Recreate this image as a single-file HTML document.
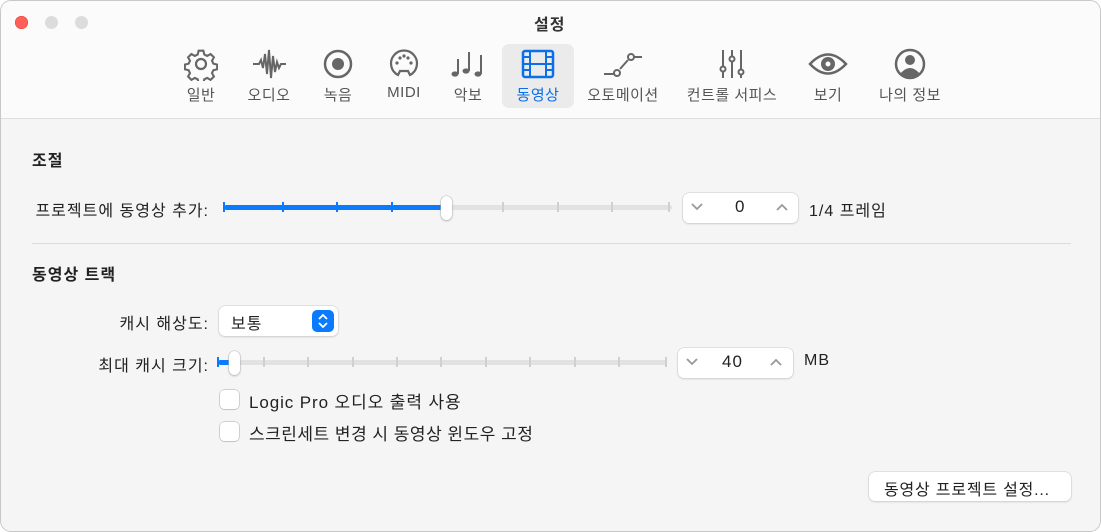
<!DOCTYPE html>
<html><head><meta charset="utf-8"><style>
*{margin:0;padding:0;box-sizing:border-box}
body{width:1101px;height:532px;background:#fff;font-family:"Liberation Sans","Noto Sans CJK KR",sans-serif;color:#222;position:relative;overflow:hidden}
.win{position:absolute;left:0;top:0;width:1101px;height:532px;border:1px solid #c8c8c8;border-radius:11px;overflow:hidden;background:#f5f5f5}
.tb{position:absolute;left:0;top:0;right:0;height:118px;background:#fbfbfb;border-bottom:1px solid #dedede}
.tl{position:absolute;top:15px;width:13px;height:13px;border-radius:50%}
.t{position:absolute;font-size:16px;white-space:nowrap;letter-spacing:1px}
.r{text-align:right;width:300px}
.item{position:absolute;top:46px;width:110px;margin-left:-55px;text-align:center;font-size:15px;color:#555;letter-spacing:.5px}
.item svg{display:block;margin:0 auto 3px;height:34px}
.sel{position:absolute;left:501px;top:43px;width:72px;height:64px;background:#ebebeb;border-radius:7px}
.track{position:absolute;height:5px;background:#e2e2e2;border-radius:3px}
.tick{position:absolute;width:2px;height:10px;background:#d0d0d0}
.fill{position:absolute;height:5px;background:#0a7aff;border-radius:3px}
.thumb{position:absolute;width:11px;height:24px;background:#fff;border-radius:6px;box-shadow:0 0 0 .5px #bbb,0 1px 2px rgba(0,0,0,.25)}
.box{position:absolute;background:#fff;border-radius:6px;box-shadow:0 0 0 .5px #ccc,0 1px 2px rgba(0,0,0,.15)}
.cb{position:absolute;left:219px;width:19px;height:19px;background:#fff;border-radius:4px;box-shadow:0 0 0 .5px #aaa,0 1px 1px rgba(0,0,0,.1)}
.b{font-weight:bold}
</style></head><body><div class="win">
<div class="tb">
<div class="tl" style="left:14px;background:#fe5f57;box-shadow:inset 0 0 0 .5px #e0443e"></div>
<div class="tl" style="left:44px;background:#dcdcdc"></div>
<div class="tl" style="left:74px;background:#dcdcdc"></div>
<div class="t b" style="left:533px;top:10px;color:#333">설정</div>
<div class="sel"></div>
<div class="item" style="left:200px"><svg viewBox="0 0 34 34" width="34"><g fill="none" stroke="#666" stroke-width="2.2"><circle cx="17" cy="17" r="5"/><path d="M14.5 3h5l1 4 3 1.5 3.6-2 3.5 3.5-2 3.6 1.4 3 4 1v5l-4 1-1.4 3 2 3.6-3.5 3.5-3.6-2-3 1.4-1 4h-5l-1-4-3-1.4-3.6 2-3.5-3.5 2-3.6-1.4-3-4-1v-5l4-1 1.4-3-2-3.6 3.5-3.5 3.6 2 3-1.5z" transform="translate(17 17) scale(.95) translate(-17 -17)"/></g></svg>일반</div>
<div class="item" style="left:268px"><svg viewBox="0 0 34 34" width="34"><path d="M1 17h6l2-4 2 8 2-14 2 20 2-24 2 28 2-22 2 16 2-10 2 6 2-4h6" fill="none" stroke="#666" stroke-width="2"/></svg>오디오</div>
<div class="item" style="left:337px"><svg viewBox="0 0 34 34" width="34"><circle cx="17" cy="17" r="13" fill="none" stroke="#666" stroke-width="2.5"/><circle cx="17" cy="17" r="6" fill="#666"/></svg>녹음</div>
<div class="item" style="left:403px"><svg viewBox="0 0 34 34" width="34"><path d="M11 28A13 13 0 1 1 23 28L21 24H13Z" fill="none" stroke="#666" stroke-width="2.2"/><g fill="#666"><circle cx="10" cy="16" r="1.6"/><circle cx="13" cy="11" r="1.6"/><circle cx="17" cy="9" r="1.6"/><circle cx="21" cy="11" r="1.6"/><circle cx="24" cy="16" r="1.6"/></g></svg>MIDI</div>
<div class="item" style="left:467px"><svg viewBox="0 0 36 34" width="36"><g fill="#666"><ellipse cx="5" cy="27" rx="3.5" ry="2.6"/><ellipse cx="16" cy="24" rx="3.5" ry="2.6"/><ellipse cx="28" cy="27" rx="3.5" ry="2.6"/></g><g stroke="#666" stroke-width="2"><path d="M8 27V12M19 24V5M31 27V8"/></g></svg>악보</div>
<div class="item" style="left:537px;color:#0a6fe8"><svg viewBox="0 0 34 34" width="34"><rect x="2" y="4" width="30" height="26" rx="2" fill="none" stroke="#0a6fe8" stroke-width="2.5"/><path d="M9 4v26M25 4v26M9 17h16M2 10h7M2 17h7M2 23h7M25 10h7M25 17h7M25 23h7" stroke="#0a6fe8" stroke-width="2"/></svg>동영상</div>
<div class="item" style="left:622px"><svg viewBox="0 0 40 34" width="40"><g fill="none" stroke="#666" stroke-width="2"><path d="M1 27h10M17 22l8-9M31 10h8"/><circle cx="14" cy="26" r="3"/><circle cx="28" cy="10" r="3"/></g></svg>오토메이션</div>
<div class="item" style="left:731px"><svg viewBox="0 0 34 34" width="34"><g fill="none" stroke="#666" stroke-width="2"><path d="M8 3v16M8 25v6M17 3v6M17 15v16M26 3v19M26 28v3"/><circle cx="8" cy="22" r="2.5"/><circle cx="17" cy="12" r="2.5"/><circle cx="26" cy="25" r="2.5"/></g></svg>컨트롤 서피스</div>
<div class="item" style="left:827px"><svg viewBox="0 0 40 34" width="40"><path d="M2 17Q20-2 38 17Q20 36 2 17Z" fill="none" stroke="#666" stroke-width="2.5"/><circle cx="20" cy="17" r="7" fill="#666"/><circle cx="20" cy="17" r="2.5" fill="#fbfbfb"/></svg>보기</div>
<div class="item" style="left:909px"><svg viewBox="0 0 34 34" width="34"><circle cx="17" cy="17" r="14" fill="none" stroke="#666" stroke-width="2.5"/><circle cx="17" cy="13" r="5" fill="#666"/><path d="M7 27Q17 15 27 27Q17 33 7 27Z" fill="#666"/></svg>나의 정보</div>
</div>

<div class="t b" style="left:31px;top:146px">조절</div>
<div class="t r" style="left:-92px;top:196px">프로젝트에 동영상 추가:</div>
<div class="track" style="left:223px;top:204px;width:448px"></div>
<div class="tick" style="left:501px;top:201px"></div><div class="tick" style="left:556px;top:201px"></div><div class="tick" style="left:610px;top:201px"></div><div class="tick" style="left:667px;top:201px"></div>
<div class="fill" style="left:223px;top:204px;width:222px"></div>
<div class="tick" style="left:222px;top:201px;background:#0a7aff"></div><div class="tick" style="left:281px;top:201px;background:#0a7aff"></div><div class="tick" style="left:335px;top:201px;background:#0a7aff"></div><div class="tick" style="left:390px;top:201px;background:#0a7aff"></div>
<div class="thumb" style="left:440px;top:195px"></div>
<div class="box" style="left:682px;top:192px;width:115px;height:30px"></div>
<svg style="position:absolute;left:689px;top:201px" width="14" height="10"><path d="M2 2l5 5 5-5" fill="none" stroke="#999" stroke-width="1.8"/></svg>
<div class="t" style="left:734px;top:196px;font-size:17px">0</div>
<svg style="position:absolute;left:774px;top:201px" width="14" height="10"><path d="M2 8l5-5 5 5" fill="none" stroke="#999" stroke-width="1.8"/></svg>
<div class="t" style="left:808px;top:196px">1/4 프레임</div>
<div style="position:absolute;left:31px;top:242px;width:1039px;height:1px;background:#dcdcdc"></div>

<div class="t b" style="left:31px;top:260px">동영상 트랙</div>
<div class="t r" style="left:-92px;top:309px">캐시 해상도:</div>
<div class="box" style="left:218px;top:305px;width:119px;height:30px"></div>
<div class="t" style="left:230px;top:309px">보통</div>
<div style="position:absolute;left:311px;top:309px;width:22px;height:22px;background:#0a7aff;border-radius:5px"><svg width="22" height="22"><path d="M7 9l4-4 4 4M7 13l4 4 4-4" fill="none" stroke="#fff" stroke-width="1.8"/></svg></div>
<div class="t r" style="left:-92px;top:351px">최대 캐시 크기:</div>
<div class="track" style="left:217px;top:359px;width:449px"></div>
<div class="tick" style="left:262px;top:356px"></div><div class="tick" style="left:306px;top:356px"></div><div class="tick" style="left:351px;top:356px"></div><div class="tick" style="left:395px;top:356px"></div><div class="tick" style="left:439px;top:356px"></div><div class="tick" style="left:484px;top:356px"></div><div class="tick" style="left:528px;top:356px"></div><div class="tick" style="left:573px;top:356px"></div><div class="tick" style="left:617px;top:356px"></div><div class="tick" style="left:664px;top:356px"></div>
<div class="fill" style="left:217px;top:359px;width:15px"></div><div class="tick" style="left:216px;top:356px;background:#0a7aff"></div>
<div class="thumb" style="left:228px;top:350px"></div>
<div class="box" style="left:677px;top:347px;width:115px;height:30px"></div>
<svg style="position:absolute;left:684px;top:356px" width="14" height="10"><path d="M2 2l5 5 5-5" fill="none" stroke="#999" stroke-width="1.8"/></svg>
<div class="t" style="left:721px;top:351px;font-size:17px">40</div>
<svg style="position:absolute;left:768px;top:356px" width="14" height="10"><path d="M2 8l5-5 5 5" fill="none" stroke="#999" stroke-width="1.8"/></svg>
<div class="t" style="left:803px;top:351px">MB</div>
<div class="cb" style="top:389px"></div>
<div class="t" style="left:248px;top:387px;font-size:17px;letter-spacing:.9px">Logic Pro 오디오 출력 사용</div>
<div class="cb" style="top:421px"></div>
<div class="t" style="left:248px;top:419px;font-size:17px;letter-spacing:.5px">스크린세트 변경 시 동영상 윈도우 고정</div>
<div class="box" style="left:868px;top:471px;width:202px;height:29px"></div>
<div class="t" style="left:883px;top:475px;letter-spacing:.8px">동영상 프로젝트 설정...</div>
</div></body></html>
